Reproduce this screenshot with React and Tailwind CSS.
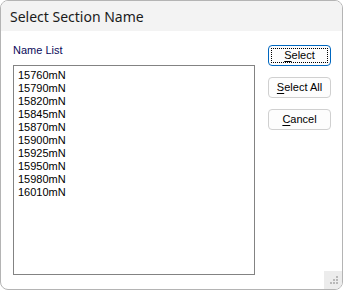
import React from "react";

const items = ["15760mN","15790mN","15820mN","15845mN","15870mN","15900mN","15925mN","15950mN","15980mN","16010mN"];

function Btn({ children, focused }) {
  return (
    <div className={"w-[63px] h-[21px] rounded-[4px] bg-[#fdfdfd] flex items-center justify-center p-[2px] " + (focused ? "border border-[#0067c0]" : "border border-[#d0d0d0]")}>
      <div className={"w-full h-full flex items-center justify-center text-[11px] leading-none text-black " + (focused ? "border border-dotted border-black" : "")}>
        {children}
      </div>
    </div>
  );
}

export default function App() {
  return (
    <div className="w-[343px] h-[290px] bg-white" style={{ fontFamily: '"Liberation Sans", Arial, sans-serif' }}>
      <div className="relative w-full h-full border border-[#b4b4b4] rounded-[8px] overflow-hidden flex flex-col bg-white">
        <div className="h-[30px] bg-[#f3f3f3] flex items-center pl-[9px] shrink-0">
          <span className="text-[14px] text-[#1b1b1b]" style={{ fontFamily: '"Noto Sans", sans-serif' }}>Select Section Name</span>
        </div>
        <div className="flex flex-1 pl-[12px] pt-[13px]">
          <div className="flex flex-col">
            <div className="text-[11px] leading-[13px] text-[#0a0a5a] h-[13px]">Name List</div>
            <div className="mt-[8px] w-[242px] h-[210px] border border-[#838383] pl-[4px] pt-[3px]">
              {items.map((t) => (
                <div key={t} className="text-[11px] leading-[13px] text-black">{t}</div>
              ))}
            </div>
          </div>
          <div className="flex flex-col gap-[11px] ml-[13px] pt-[1px]">
            <Btn focused><span><span className="underline underline-offset-2">S</span>elect</span></Btn>
            <Btn><span><span className="underline underline-offset-2">S</span>elect All</span></Btn>
            <Btn><span><span className="underline underline-offset-2">C</span>ancel</span></Btn>
          </div>
        </div>
        <div className="absolute right-0 bottom-0 w-[18px] h-[18px] bg-[#ececec] flex items-end justify-end">
          <svg width="18" height="18" viewBox="0 0 18 18">
            <rect x="12" y="5" width="2" height="2" fill="#b8b8b8" />
            <rect x="9" y="8" width="2" height="2" fill="#b8b8b8" />
            <rect x="12" y="8" width="2" height="2" fill="#b8b8b8" />
            <rect x="6" y="11" width="2" height="2" fill="#b8b8b8" />
            <rect x="9" y="11" width="2" height="2" fill="#b8b8b8" />
            <rect x="12" y="11" width="2" height="2" fill="#b8b8b8" />
          </svg>
        </div>
      </div>
    </div>
  );
}
